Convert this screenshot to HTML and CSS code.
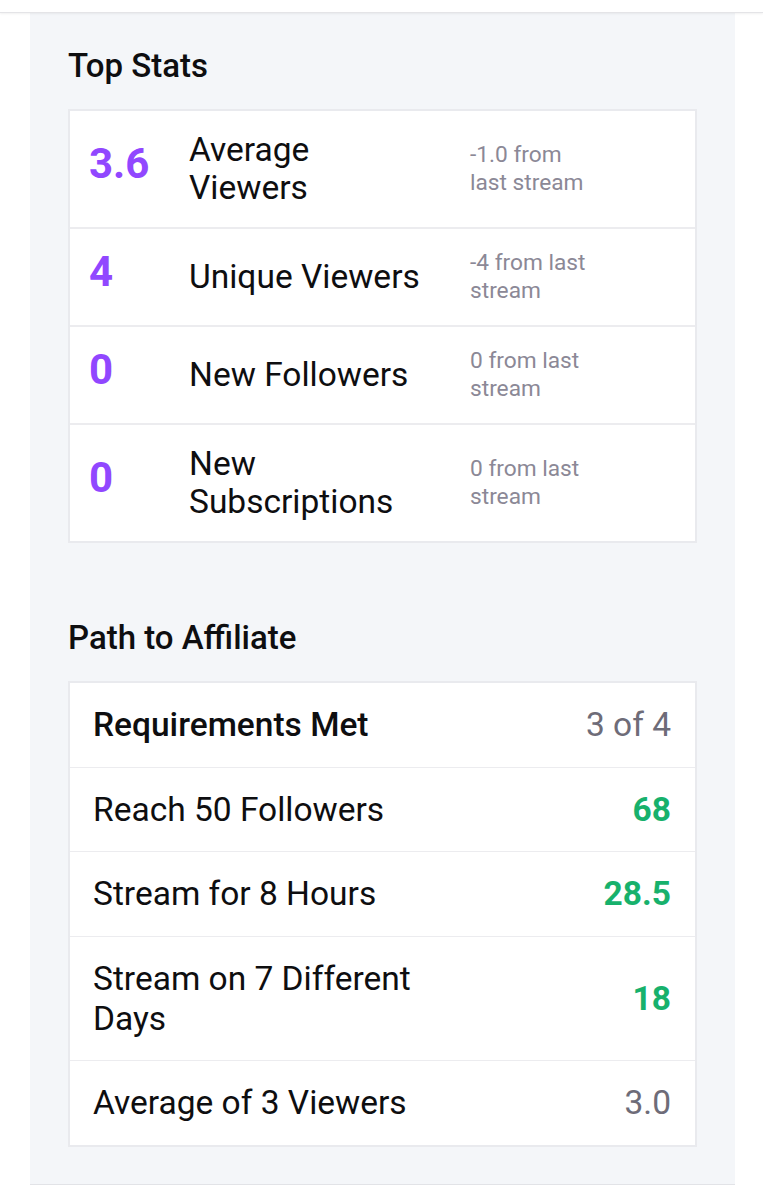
FILE: index.html
```html
<!DOCTYPE html>
<html lang="en">
<head>
<meta charset="utf-8">
<title>Stream Summary</title>
<link rel="stylesheet" href="styles.css">
</head>
<body>
<div class="topbar"></div>
<main class="panel">
  <section class="section">
    <h2 class="section-title">Top Stats</h2>
    <div class="card stats">
      <div class="stat-row">
        <div class="stat-value">3.6</div>
        <div class="stat-label">Average Viewers</div>
        <div class="stat-delta">-1.0 from last stream</div>
      </div>
      <div class="stat-row">
        <div class="stat-value">4</div>
        <div class="stat-label">Unique Viewers</div>
        <div class="stat-delta">-4 from last stream</div>
      </div>
      <div class="stat-row">
        <div class="stat-value">0</div>
        <div class="stat-label">New Followers</div>
        <div class="stat-delta">0 from last stream</div>
      </div>
      <div class="stat-row">
        <div class="stat-value">0</div>
        <div class="stat-label">New Subscriptions</div>
        <div class="stat-delta">0 from last stream</div>
      </div>
    </div>
  </section>

  <section class="section section-affiliate">
    <h2 class="section-title">Path to Affiliate</h2>
    <div class="card reqs">
      <div class="req-row req-head">
        <div class="req-label">Requirements Met</div>
        <div class="req-value muted">3 of 4</div>
      </div>
      <div class="req-row">
        <div class="req-label">Reach 50 Followers</div>
        <div class="req-value met">68</div>
      </div>
      <div class="req-row">
        <div class="req-label">Stream for 8 Hours</div>
        <div class="req-value met">28.5</div>
      </div>
      <div class="req-row">
        <div class="req-label">Stream on 7 Different Days</div>
        <div class="req-value met">18</div>
      </div>
      <div class="req-row">
        <div class="req-label">Average of 3 Viewers</div>
        <div class="req-value muted">3.0</div>
      </div>
    </div>
  </section>
</main>
</body>
</html>
```

FILE: styles.css
```css
* {
  box-sizing: border-box;
}

html,
body {
  margin: 0;
  padding: 0;
  background: #ffffff;
}

body {
  font-family: Roboto, "Noto Sans", "Liberation Sans", sans-serif;
  color: #0e0e10;
  height: 1200px;
  overflow: hidden;
}

/* thin white app bar with its drop shadow */
.topbar {
  height: 13px;
  background: #ffffff;
  border-bottom: 1px solid #e4e4e7;
  box-shadow: 0 1px 2px rgba(0, 0, 0, 0.06);
  position: relative;
  z-index: 1;
}

.panel {
  width: 705px;
  margin-left: 30px;
  background: #f4f6f9;
  border-bottom: 1px solid #e2e3e7;
  padding: 35px 38px 37px;
}

.section-title {
  margin: 0;
  font-size: 33px;
  line-height: 36px;
  font-weight: 500;
  color: #0e0e10;
}

.section-affiliate {
  margin-top: 77px;
}

.card {
  width: 629px;
  margin-top: 25px;
  background: #ffffff;
  border: 2px solid #e9eaee;
}

/* Top Stats */
.stat-row {
  display: grid;
  grid-template-columns: 100px 281px 125px;
  align-items: center;
  padding: 20px 19px;
  border-top: 2px solid #ececef;
}

.stat-row:first-child {
  border-top: 0;
}

.stat-value {
  font-size: 42px;
  line-height: 38px;
  padding-bottom: 10px;
  font-weight: 700;
  color: #9147ff;
}

.stat-label {
  font-size: 33.5px;
  line-height: 38px;
  padding-right: 45px;
}

.stat-delta {
  font-size: 22.7px;
  line-height: 28px;
  color: #8b8896;
}

/* Path to Affiliate */
.req-row {
  display: flex;
  align-items: center;
  justify-content: space-between;
  padding: 22px 24px 21.6px 23px;
  border-top: 1px solid #ececef;
}

.req-row:first-child {
  border-top: 0;
}

.req-label {
  font-size: 33.5px;
  line-height: 40px;
  max-width: 350px;
}

.req-head .req-label {
  font-weight: 500;
}

.req-value {
  font-size: 33.5px;
  line-height: 40px;
  text-align: right;
}

.req-value.muted {
  color: #6e6c78;
}

.req-value.met {
  color: #17b16c;
  font-weight: 700;
}
```
